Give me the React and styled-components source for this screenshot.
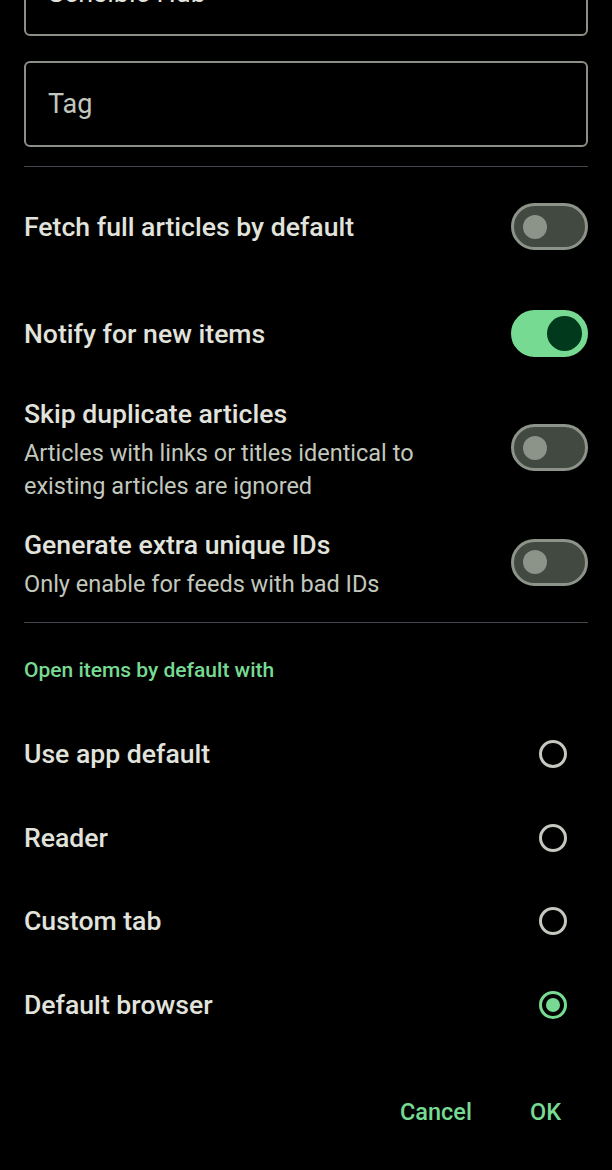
import React from "react";
import styled, { createGlobalStyle } from "styled-components";

const Global = createGlobalStyle`
  html, body {
    margin: 0;
    padding: 0;
    background: #000;
    overflow: hidden;
  }
  body {
    font-family: Roboto, "Noto Sans", sans-serif;
    -webkit-font-smoothing: antialiased;
  }
`;

const Screen = styled.div`
  width: 612px;
  height: 1170px;
  background: #000;
  overflow: hidden;
`;

const Scroller = styled.div`
  margin-top: -50px;
  padding: 0 24px;
  display: flex;
  flex-direction: column;
`;

const Field = styled.div`
  height: 86px;
  box-sizing: border-box;
  border: 2px solid #8a9086;
  border-radius: 6px;
  display: flex;
  align-items: center;
  padding: 0 22px;
  margin-top: ${(p) => p.$mt || 0}px;
  font-size: 27px;
  color: ${(p) => (p.$placeholder ? "#c2c8bd" : "#e1e3dc")};
`;

const Divider = styled.div`
  height: 1px;
  background: #44474d;
  margin-top: ${(p) => p.$mt}px;
`;

const SwitchRow = styled.div`
  display: flex;
  align-items: center;
  justify-content: space-between;
  padding: 12px 0;
  margin-top: ${(p) => p.$mt}px;
`;

const TextBlock = styled.div`
  display: flex;
  flex-direction: column;
  gap: 6px;
`;

const Title = styled.div`
  font-size: 26.6px;
  font-weight: 500;
  line-height: 34px;
  color: #e1e3dc;
`;

const Subtitle = styled.div`
  font-size: 23.5px;
  line-height: 33px;
  color: #c2c8bd;
`;

const Track = styled.span`
  flex: none;
  width: 77px;
  height: 47px;
  box-sizing: border-box;
  margin-bottom: ${(p) => (p.$lift ? 5 : 0)}px;
  border-radius: 24px;
  border: 3px solid ${(p) => (p.$on ? "#77da93" : "#8c9388")};
  background: ${(p) => (p.$on ? "#77da93" : "#414940")};
  display: flex;
  align-items: center;
  justify-content: ${(p) => (p.$on ? "flex-end" : "flex-start")};
  padding: ${(p) => (p.$on ? "0 3px" : "0 8.5px")};
`;

const Thumb = styled.span`
  width: ${(p) => (p.$on ? 35 : 24)}px;
  height: ${(p) => (p.$on ? 35 : 24)}px;
  border-radius: 50%;
  background: ${(p) => (p.$on ? "#00391b" : "#8c9388")};
`;

const SectionHeader = styled.div`
  margin-top: 33px;
  font-size: 21px;
  font-weight: 500;
  line-height: 28px;
  color: #77da93;
`;

const RadioList = styled.div`
  margin-top: 28.5px;
  display: flex;
  flex-direction: column;
`;

const RadioRow = styled.div`
  height: 83.5px;
  display: flex;
  align-items: center;
  justify-content: space-between;
`;

const Radio = styled.span`
  flex: none;
  width: 28px;
  height: 28px;
  box-sizing: border-box;
  margin-right: 21px;
  border-radius: 50%;
  border: 3px solid ${(p) => (p.$checked ? "#77da93" : "#c4c8bf")};
  display: flex;
  align-items: center;
  justify-content: center;
  &::after {
    content: "";
    display: ${(p) => (p.$checked ? "block" : "none")};
    width: 14px;
    height: 14px;
    border-radius: 50%;
    background: #77da93;
  }
`;

const Actions = styled.div`
  margin-top: 36px;
  margin-right: 9px;
  display: flex;
  justify-content: flex-end;
  gap: 22px;
`;

const TextButton = styled.button`
  height: 59px;
  padding: 0 18px;
  border: none;
  background: transparent;
  font-family: Roboto, "Noto Sans", sans-serif;
  font-size: 23.5px;
  font-weight: 500;
  color: #77da93;
`;

function Switch({ on, lift }) {
  return (
    <Track $on={on} $lift={lift}>
      <Thumb $on={on} />
    </Track>
  );
}

const toggles = [
  { title: "Fetch full articles by default", on: false, mt: 24 },
  { title: "Notify for new items", on: true, mt: 36 },
  {
    title: "Skip duplicate articles",
    sub: ["Articles with links or titles identical to", "existing articles are ignored"],
    on: false,
    mt: 16,
  },
  {
    title: "Generate extra unique IDs",
    sub: ["Only enable for feeds with bad IDs"],
    on: false,
    mt: 1,
  },
];

const options = [
  { label: "Use app default", checked: false },
  { label: "Reader", checked: false },
  { label: "Custom tab", checked: false },
  { label: "Default browser", checked: true },
];

export default function App() {
  return (
    <Screen>
      <Global />
      <Scroller>
        <Field>Sensible Hub</Field>
        <Field $mt={25} $placeholder>
          Tag
        </Field>
        <Divider $mt={19} />
        {toggles.map((t) => (
          <SwitchRow key={t.title} $mt={t.mt}>
            <TextBlock>
              <Title>{t.title}</Title>
              {t.sub && (
                <Subtitle>
                  {t.sub.map((line, i) => (
                    <React.Fragment key={i}>
                      {i > 0 && <br />}
                      {line}
                    </React.Fragment>
                  ))}
                </Subtitle>
              )}
            </TextBlock>
            <Switch on={t.on} lift={!!t.sub} />
          </SwitchRow>
        ))}
        <Divider $mt={9} />
        <SectionHeader>Open items by default with</SectionHeader>
        <RadioList>
          {options.map((o) => (
            <RadioRow key={o.label}>
              <Title>{o.label}</Title>
              <Radio $checked={o.checked} />
            </RadioRow>
          ))}
        </RadioList>
        <Actions>
          <TextButton>Cancel</TextButton>
          <TextButton>OK</TextButton>
        </Actions>
      </Scroller>
    </Screen>
  );
}
